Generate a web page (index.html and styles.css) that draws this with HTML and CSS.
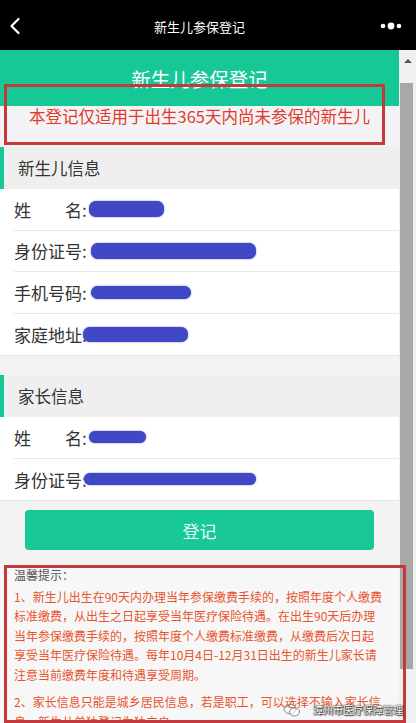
FILE: index.html
```html
<!DOCTYPE html>
<html lang="zh-CN">
<head>
<meta charset="utf-8">
<title>新生儿参保登记</title>
<link rel="stylesheet" href="styles.css">
</head>
<body>
<div class="phone">
  <header class="navbar">
    <svg class="nav-back" width="12" height="18" viewBox="0 0 12 18"><polyline points="9.5,2 2.5,9 9.5,16" fill="none" stroke="#fff" stroke-width="2.2" stroke-linecap="round" stroke-linejoin="round"/></svg>
    <h1 class="nav-title">新生儿参保登记</h1>
    <svg class="nav-more" width="24" height="10" viewBox="0 0 24 10"><circle cx="3" cy="5" r="2.3" fill="#fff"/><circle cx="11" cy="5" r="3.4" fill="#fff"/><circle cx="19" cy="5" r="2.3" fill="#fff"/></svg>
  </header>

  <div class="viewport">
    <main class="content">
      <div class="banner">新生儿参保登记</div>
      <p class="notice">本登记仅适用于出生365天内尚未参保的新生儿</p>

      <section class="group">
        <h2 class="group-title">新生儿信息</h2>
        <div class="row"><span class="label spread"><span>姓</span><span>名</span></span>:<span class="mask mask-a"></span></div>
        <div class="row"><span class="label">身份证号</span>:<span class="mask mask-b"></span></div>
        <div class="row"><span class="label">手机号码</span>:<span class="mask mask-c"></span></div>
        <div class="row"><span class="label">家庭地址</span>:<span class="mask mask-d"></span></div>
      </section>

      <section class="group">
        <h2 class="group-title">家长信息</h2>
        <div class="row"><span class="label spread"><span>姓</span><span>名</span></span>:<span class="mask mask-e"></span></div>
        <div class="row"><span class="label">身份证号</span>:<span class="mask mask-f"></span></div>
      </section>

      <div class="actions"><button class="submit" type="button">登记</button></div>

      <section class="tips">
        <p class="tips-title">温馨提示：</p>
        <p class="tip">1、新生儿出生在90天内办理当年参保缴费手续的，按照年度个人缴费标准缴费，从出生之日起享受当年医疗保险待遇。在出生90天后办理当年参保缴费手续的，按照年度个人缴费标准缴费，从缴费后次日起享受当年医疗保险待遇。每年10月4日-12月31日出生的新生儿家长请注意当前缴费年度和待遇享受周期。</p>
        <p class="tip">2、家长信息只能是城乡居民信息，若是职工，可以选择不输入家长信息，新生儿单独登记为独立户。</p>
      </section>
    </main>
    <div class="scrollbar">
      <span class="scroll-arrow"></span>
      <span class="scroll-thumb"></span>
    </div>
  </div>

  <div class="mark mark-notice"></div>
  <div class="mark mark-tips"></div>
  <div class="watermark">
    <svg width="18" height="15" viewBox="0 0 18 15"><ellipse cx="7" cy="6" rx="6" ry="4.8" fill="none" stroke="#8a8a8a" stroke-width="1"/><ellipse cx="11.5" cy="9" rx="5" ry="4" fill="rgba(255,255,255,0.6)" stroke="#8a8a8a" stroke-width="1"/></svg>
    <span class="watermark-text">漳州市医疗保障管理</span>
  </div>
</div>
</body>
</html>
```

FILE: styles.css
```css
* {
  box-sizing: border-box;
  margin: 0;
  padding: 0;
}

html, body {
  width: 416px;
  height: 723px;
  overflow: hidden;
  background: #f4f4f4;
}

body {
  font-family: "Noto Sans CJK SC", "Microsoft YaHei", sans-serif;
  color: #333;
}

.phone {
  position: relative;
  width: 416px;
  height: 723px;
  display: flex;
  flex-direction: column;
}

/* nav bar */
.navbar {
  height: 50px;
  background: #000;
  display: flex;
  align-items: center;
  padding: 2px 12px 0 9px;
  flex: none;
}

.nav-back {
  display: block;
}

.nav-title {
  flex: 1;
  text-align: center;
  color: #fff;
  font-size: 13px;
  font-weight: normal;
  margin-left: -2px;
}

.nav-more {
  display: block;
}

/* viewport */
.viewport {
  flex: 1;
  display: flex;
  overflow: hidden;
}

.content {
  width: 399px;
  flex: none;
  background: #f3f3f4;
}

.banner {
  height: 56px;
  background: #17c897;
  color: #fff;
  font-size: 19.5px;
  text-align: center;
  line-height: 56px;
  padding-top: 1px;
}

.notice {
  height: 41px;
  color: #e2392d;
  font-size: 16.5px;
  line-height: 20px;
  text-align: center;
  background: #f3f3f5;
}

.group {
  background: #fff;
  border-bottom: 1px solid #e6e6e6;
}

.group + .group {
  margin-top: 19px;
}

.group-title {
  height: 42px;
  background: #efefef;
  border-left: 4px solid #17c897;
  padding-left: 14px;
  font-size: 16.5px;
  font-weight: normal;
  line-height: 42px;
  color: #333;
}

.row {
  height: 41.5px;
  margin-left: 14px;
  display: flex;
  align-items: center;
  font-size: 17px;
  color: #333;
  border-bottom: 1px solid #e8e8e8;
}

.row:last-child {
  border-bottom: none;
}

.label {
  display: inline-block;
  width: 68px;
  white-space: nowrap;
}

.spread {
  display: flex;
  justify-content: space-between;
}

.mask {
  display: inline-block;
  background: #4048c6;
  border-radius: 7px;
  box-shadow: 0 0 1.5px #4048c6;
}

.mask-a { width: 75px; height: 16px; margin-left: 2px; }
.mask-b { width: 165px; height: 16px; margin-left: 4px; }
.mask-c { width: 100px; height: 13px; margin-left: 4px; }
.mask-d { width: 105px; height: 15px; margin-left: -4px; }
.mask-e { width: 57px; height: 12px; margin-left: 2px; }
.mask-f { width: 172px; height: 12px; margin-left: -3px; }

.actions {
  padding: 9px 25px 0;
}

.submit {
  display: block;
  width: 100%;
  height: 40px;
  border: none;
  border-radius: 4px;
  background: #18c897;
  color: #e8fbf5;
  font-family: inherit;
  font-size: 17px;
}

.tips {
  margin-top: 15px;
  padding: 0 15px 0 14px;
  background: #f7f7f7;
  font-size: 12px;
  line-height: 19.5px;
}

.tips-title {
  color: #555;
  margin-bottom: 2px;
}

.tip {
  color: #e7552f;
  margin-bottom: 8px;
}

/* scrollbar */
.scrollbar {
  flex: 1;
  background: #f0f0f0;
  display: flex;
  flex-direction: column;
  align-items: center;
  padding-top: 9px;
}

.scroll-arrow {
  width: 0;
  height: 0;
  border-left: 4px solid transparent;
  border-right: 4px solid transparent;
  border-bottom: 4px solid #555;
}

.scroll-thumb {
  margin-top: 20px;
  width: 13px;
  height: 586px;
  background: #a8a8a8;
  align-self: flex-start;
  margin-left: 1px;
}

/* annotation overlays */
.mark {
  position: absolute;
  border: 3px solid #c4393c;
  pointer-events: none;
}

.mark-notice {
  left: 4px;
  top: 84px;
  width: 381px;
  height: 61px;
}

.mark-tips {
  left: 4px;
  top: 565px;
  width: 402px;
  height: 158px;
}

.watermark {
  position: absolute;
  left: 283px;
  top: 702px;
  display: flex;
  align-items: center;
  gap: 12px;
}

.watermark svg {
  display: block;
}

.watermark-text {
  color: #fff;
  font-size: 10px;
  line-height: 16px;
  text-shadow: 0 0 1px #222, 0 0 2px #333, 1px 1px 1px #333;
}
```
